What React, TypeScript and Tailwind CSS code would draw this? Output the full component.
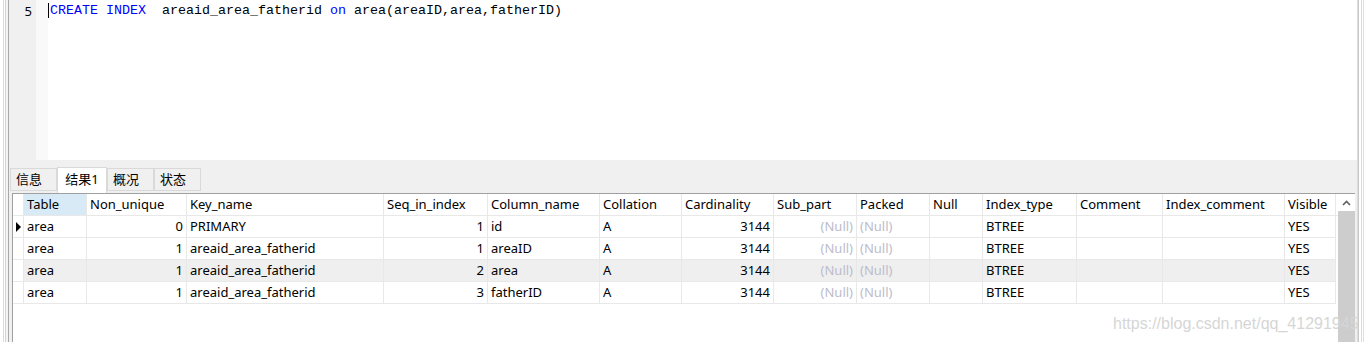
import React from "react";

const cols = [
  { name: "Table", w: 63, align: "left" },
  { name: "Non_unique", w: 100, align: "right" },
  { name: "Key_name", w: 197, align: "left" },
  { name: "Seq_in_index", w: 104, align: "right" },
  { name: "Column_name", w: 112, align: "left" },
  { name: "Collation", w: 82, align: "left" },
  { name: "Cardinality", w: 92, align: "right" },
  { name: "Sub_part", w: 83, align: "right" },
  { name: "Packed", w: 73, align: "left" },
  { name: "Null", w: 53, align: "left" },
  { name: "Index_type", w: 94, align: "left" },
  { name: "Comment", w: 86, align: "left" },
  { name: "Index_comment", w: 122, align: "left" },
  { name: "Visible", w: 51, align: "left" },
];

const rows = [
  ["area", "0", "PRIMARY", "1", "id", "A", "3144", "(Null)", "(Null)", "", "BTREE", "", "", "YES"],
  ["area", "1", "areaid_area_fatherid", "1", "areaID", "A", "3144", "(Null)", "(Null)", "", "BTREE", "", "", "YES"],
  ["area", "1", "areaid_area_fatherid", "2", "area", "A", "3144", "(Null)", "(Null)", "", "BTREE", "", "", "YES"],
  ["area", "1", "areaid_area_fatherid", "3", "fatherID", "A", "3144", "(Null)", "(Null)", "", "BTREE", "", "", "YES"],
];

const tabs = ["信息", "结果1", "概况", "状态"];

export default function App() {
  return (
    <div
      className="relative flex h-[342px] w-[1365px] overflow-hidden bg-white text-[13px] text-black"
      style={{ fontFamily: '"Noto Sans", "Noto Sans CJK SC", sans-serif' }}
    >
      {/* left window edges */}
      <div className="flex h-full w-[9px] shrink-0">
        <div className="w-[3px] bg-white" />
        <div className="w-[1px] bg-[#dcdcdc]" />
        <div className="w-[1px] bg-white" />
        <div className="w-[1px] bg-[#d4d4d4]" />
        <div className="w-[2px] bg-[#f4f4f4]" />
        <div className="w-[1px] bg-[#a8a8a8]" />
      </div>

      <div className="flex h-full w-[1348px] shrink-0 flex-col">
        {/* editor */}
        <div className="flex h-[160px] shrink-0">
          <div className="flex w-[27px] justify-end bg-[#f0f0f0] pr-[4px] pt-[3px] leading-[16px]">
            5
          </div>
          <div className="w-[12px] bg-[#f9f9f9]" />
          <div className="relative flex-1 bg-white pl-[2px] pt-[3px]">
            <div className="absolute left-0 top-[3px] h-[15px] w-[1px] bg-black" />
            <div
              className="whitespace-pre text-[13.33px] leading-[16px]"
              style={{ fontFamily: '"Liberation Mono", monospace' }}
            >
              <span className="text-[#0000ff]">CREATE INDEX</span>
              {"  areaid_area_fatherid "}
              <span className="text-[#0000ff]">on</span>
              {" area(areaID,area,fatherID)"}
            </div>
          </div>
        </div>

        {/* tabs */}
        <div className="flex h-[33px] shrink-0 items-end bg-[#f0f0f0] pl-[1px]">
          {tabs.map((t, i) =>
            i === 1 ? (
              <div
                key={t}
                className="mb-[-1px] flex h-[27px] w-[50px] items-center justify-center border border-b-0 border-[#d9d9d9] bg-white pb-[2px]"
              >
                {t}
              </div>
            ) : (
              <div
                key={t}
                className="mb-[2px] flex h-[23px] w-[47px] items-center border border-[#d9d9d9] bg-[#f0f0f0] pl-[5px]"
              >
                {t}
              </div>
            )
          )}
        </div>

        {/* grid */}
        <div className="flex flex-1 bg-[#f0f0f0] pl-[3px] pr-[2px]">
          <div className="flex flex-1 border-l border-t border-[#a0a0a0] bg-white">
            <div className="flex-1">
              {/* header */}
              <div className="flex h-[22px] border-b border-[#e8e8e8]">
                <div className="w-[11px] shrink-0 border-r border-[#e8e8e8]" />
                {cols.map((c, i) => (
                  <div
                    key={c.name}
                    className={`flex shrink-0 items-center border-r border-[#e8e8e8] px-[3px] pt-[1px] ${
                      i === 0 ? "bg-[#d9eaf7]" : ""
                    }`}
                    style={{ width: c.w }}
                  >
                    {c.name}
                  </div>
                ))}
              </div>
              {rows.map((r, ri) => (
                <div key={ri} className="flex h-[22px]">
                  <div className="flex w-[11px] shrink-0 items-center border-b border-r border-[#e8e8e8] pl-[3px]">
                    {ri === 0 && (
                      <div className="h-0 w-0 border-y-[5px] border-l-[5px] border-y-transparent border-l-black" />
                    )}
                  </div>
                  {r.map((v, ci) => {
                    const c = cols[ci];
                    const isNull = v === "(Null)";
                    return (
                      <div
                        key={ci}
                        className={`flex shrink-0 items-center overflow-hidden whitespace-nowrap border-b border-r border-[#e8e8e8] px-[3px] pt-[1px] ${
                          c.align === "right" ? "justify-end" : ""
                        } ${ri === 2 ? "bg-[#efefef]" : ""} ${
                          isNull ? "text-[#bcbccc]" : ""
                        }`}
                        style={{ width: c.w }}
                      >
                        {v}
                      </div>
                    );
                  })}
                </div>
              ))}
            </div>
            {/* scrollbar */}
            <div className="flex w-[17px] shrink-0 flex-col">
              <div className="flex h-[17px] items-center justify-center bg-white">
                <svg width="9" height="6" viewBox="0 0 9 6">
                  <path d="M1 5 L4.5 1.5 L8 5" fill="none" stroke="#606060" strokeWidth="1.6" />
                </svg>
              </div>
              <div className="flex-1 bg-[#cdcdcd]" />
            </div>
          </div>
        </div>
      </div>

      {/* right window edges */}
      <div className="flex h-full flex-1">
        <div className="w-[1px] bg-[#dcdcdc]" />
        <div className="w-[1px] bg-[#c8c8c8]" />
        <div className="w-[2px] bg-white" />
        <div className="w-[1px] bg-[#dcdcdc]" />
        <div className="w-[1px] bg-white" />
        <div className="w-[1px] bg-[#e0e0e0]" />
        <div className="flex-1 bg-white" />
      </div>

      <div
        className="pointer-events-none absolute left-[1113px] top-[312px] whitespace-nowrap text-[16px] text-[#d6d6d6]"
        style={{ fontFamily: '"Liberation Sans", Arial, sans-serif' }}
      >
        https://blog.csdn.net/qq_41291945
      </div>
    </div>
  );
}
